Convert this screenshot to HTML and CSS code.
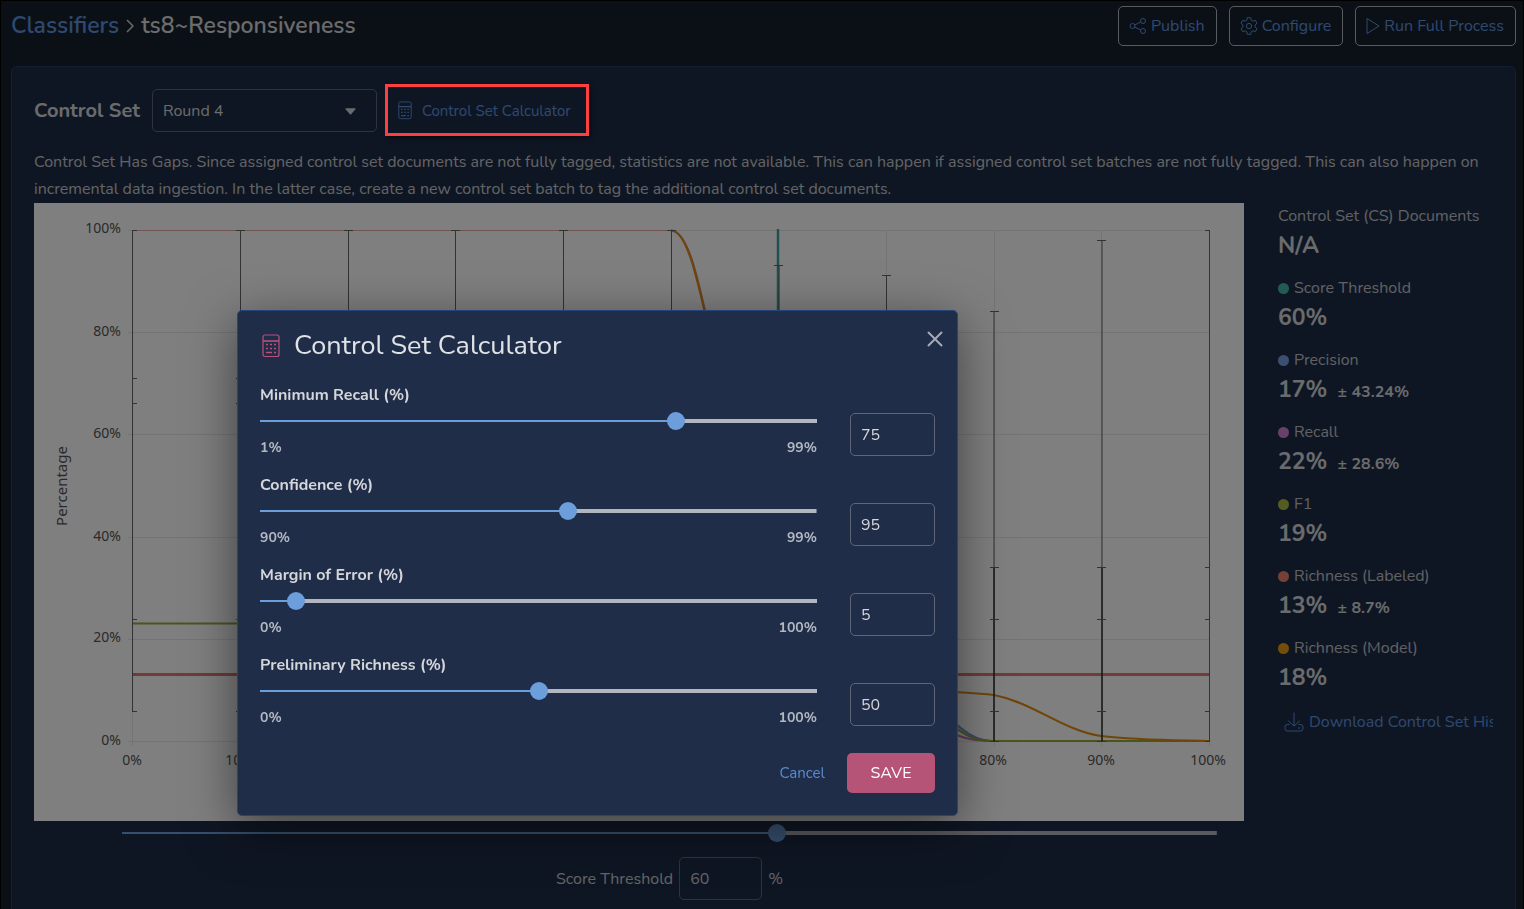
FILE: index.html
```html
<!DOCTYPE html>
<html lang="en">
<head>
<meta charset="utf-8">
<meta name="viewport" content="width=device-width, initial-scale=1">
<title>ts8~Responsiveness</title>
<link rel="stylesheet" href="styles.css">
</head>
<body>
<svg class="defs" aria-hidden="true">
  <symbol id="calc" viewBox="0 0 18 24">
    <rect x="1" y="1" width="16" height="21.500" rx="2" fill="none" stroke="currentColor" stroke-width="1.200"/>
    <path d="M1 7h16" stroke="currentColor" stroke-width="1.600"/>
    <path d="M4 10.500h2M8 10.500h2M12 10.500h2M4 14.500h2M8 14.500h2M12 14.500h2M4 18.500h6M12 18.500h2" stroke="currentColor" stroke-width="1.600"/>
  </symbol>
</svg>
<div class="page">
  <header class="topbar">
    <h1 class="crumbs"><a href="#">Classifiers</a>
      <svg class="chevron" viewBox="0 0 8 14"><path d="M1 1l6 6-6 6" fill="none" stroke="currentColor" stroke-width="1.500"/></svg>
      <span>ts8~Responsiveness</span></h1>
    <div class="actions">
      <button type="button" class="btn-outline">
        <svg viewBox="0 0 18 18" class="icon"><g fill="none" stroke="currentColor"><circle cx="3.500" cy="9" r="2.500"/><circle cx="14" cy="4" r="2.500"/><circle cx="14" cy="14" r="2.500"/><path d="M5.800 8l5.900-3M5.800 10l5.900 3"/></g></svg>
        Publish</button>
      <button type="button" class="btn-outline">
        <svg viewBox="0 0 18 18" class="icon"><g fill="none" stroke="currentColor" stroke-linejoin="round"><path d="M7.300.7h3.400l.5 2.500 1.700 1 2.400-.9 1.700 3-1.900 1.600v2.200l1.900 1.600-1.700 3-2.400-.9-1.700 1-.5 2.500H7.300l-.5-2.500-1.700-1-2.400.9-1.700-3 1.900-1.600V7.900L1 6.300l1.700-3 2.400.9 1.700-1z"/><circle cx="9" cy="9" r="2.600"/></g></svg>
        Configure</button>
      <button type="button" class="btn-outline">
        <svg viewBox="0 0 14 18" class="icon icon-play"><path d="M1 1.500v15L13 9z" fill="none" stroke="currentColor" stroke-linejoin="round"/></svg>
        Run Full Process</button>
    </div>
  </header>

  <main class="card">
    <div class="controls">
      <label class="controls-title" for="round">Control Set</label>
      <div class="select-wrap">
        <select id="round"><option>Round 4</option></select>
        <svg class="caret" viewBox="0 0 12 7"><path d="M1 0h10q1 0 .3 1L6.700 6.400q-.7.700-1.400 0L.7 1Q0 0 1 0z" fill="currentColor"/></svg>
      </div>
      <div class="calc-link">
        <button type="button"><svg class="calc-small"><use href="#calc"/></svg>Control Set Calculator</button>
        <span class="highlight"></span>
      </div>
    </div>
    <p class="notice">Control Set Has Gaps. Since assigned control set documents are not fully tagged, statistics are not available. This can happen if assigned control set batches are not fully tagged. This can also happen on incremental data ingestion. In the latter case, create a new control set batch to tag the additional control set documents.</p>
    <div class="content">
      <section class="chart-col">
        <svg class="chart" viewBox="0 0 1210 618" role="img" aria-label="Control set statistics by score threshold">
          <path class="grid" d="M94 27.500H1175M94 129.500H1175M94 231.500H1175M94 334.500H1175M94 436.500H1175M94 538.500H1175M98.500 27V543M206.500 27V543M314.500 27V543M421.500 27V543M529.500 27V543M637.500 27V543M744.500 27V543M852.500 27V543M960.500 27V543M1067.500 27V543M1175.500 27V543"/>
          <g fill="none" stroke-width="2.200">
            <path class="c-recall" d="M637 27.500C656 27 667 92 678 140C720 350 744 425 784 450C850 470 890 538 955 538"/>
            <path class="c-precision" d="M637 420C740 430 780 420 852 450C900 485 920 538 958 538H1175"/>
            <path class="c-f1" d="M98 420.500H637C740 430 780 430 852 460C900 494 918 538 955 538H1175"/>
            <path class="c-labeled" d="M98 471.500H1175"/>
            <path class="c-model" d="M637 27.500C655 27 666 90 677 136C710 340 744 460 852 480C890 490 930 488 960 492C1000 500 1030 528 1067 533C1100 537 1130 537 1175 538"/>
          </g>
          <path class="c-top" d="M98 27.500H637"/>
          <path class="c-threshold" d="M744 26V538"/>
          <g class="bars">
            <path d="M98.500 27.500V508M206.500 27.500V538M314.500 27.500V538M421.500 27.500V538M529.500 27.500V538M637.500 27.500V538M745 62.500V538M852.500 72.500V538M960 108V364M1068 37V364M1175.500 27.500V538"/>
            <path class="strong" d="M960 364V538M1068 364V538"/>
            <path d="M98 27.500h5M98 175.500h5M98 200.500h5M98 416.500h5M98 508.500h5M202 27.500h9M202 175.500h9M202 200.500h9M202 416.500h9M202 508.500h9M310 27.500h9M417 27.500h9M525 27.500h9M633 27.500h9M740 62.500h9M848 72.500h9M956 108.500h9M1063 37.500h9M1171 27.500h5M956 364.500h9M956 416.500h9M956 508.500h9M956 538.500h9M1063 364.500h9M1063 416.500h9M1063 508.500h9M1063 538.500h9M1171 364.500h5M1171 416.500h5M1171 508.500h5M1171 538.500h5"/>
          </g>
          <g class="axis" text-anchor="end">
            <text x="87" y="30">100%</text><text x="87" y="133">80%</text><text x="87" y="235">60%</text><text x="87" y="338">40%</text><text x="87" y="439">20%</text><text x="87" y="542">0%</text>
          </g>
          <g class="axis" text-anchor="middle">
            <text x="98" y="562">0%</text><text x="205" y="562">10%</text><text x="959" y="562">80%</text><text x="1067" y="562">90%</text><text x="1174" y="562">100%</text>
            <text class="axis-title" transform="translate(33 283) rotate(-90)">Percentage</text>
          </g>
        </svg>
        <div class="threshold">
          <input class="slider" type="range" min="0" max="100" value="60" aria-label="Score Threshold slider" style="--pos:.6">
          <div class="threshold-field"><label for="score">Score Threshold</label><input id="score" class="box" type="text" value="60"><span>%</span></div>
        </div>
      </section>
      <aside class="stats">
        <dl>
          <div><dt>Control Set (CS) Documents</dt><dd>N/A</dd></div>
          <div><dt><i class="dot d-threshold"></i>Score Threshold</dt><dd>60%</dd></div>
          <div><dt><i class="dot d-precision"></i>Precision</dt><dd>17% <small>± 43.24%</small></dd></div>
          <div><dt><i class="dot d-recall"></i>Recall</dt><dd>22% <small>± 28.6%</small></dd></div>
          <div><dt><i class="dot d-f1"></i>F1</dt><dd>19%</dd></div>
          <div><dt><i class="dot d-labeled"></i>Richness (Labeled)</dt><dd>13% <small>± 8.7%</small></dd></div>
          <div><dt><i class="dot d-model"></i>Richness (Model)</dt><dd>18%</dd></div>
        </dl>
        <a class="download" href="#"><svg viewBox="0 0 20 20"><g fill="none" stroke="currentColor" stroke-linecap="round" stroke-linejoin="round"><path d="M10 1v13M4.500 9l5.500 5 5.500-5"/><path d="M5 12.500H3.200Q1 12.500 1 15v1.500Q1 19 3.200 19h13.600q2.200 0 2.200-2.500V15q0-2.500-2.200-2.500H15M14.500 16h1.500"/></g></svg>Download Control Set History</a>
      </aside>
    </div>
  </main>
</div>

<div class="backdrop"></div>
<div class="modal" role="dialog" aria-modal="true" aria-labelledby="modal-title">
  <div class="modal-head">
    <svg class="calc-large"><use href="#calc"/></svg>
    <h2 id="modal-title">Control Set Calculator</h2>
    <button type="button" class="close" aria-label="Close"><svg viewBox="0 0 16 16"><path d="M1.500 1.500l13 13M14.500 1.500l-13 13" stroke="currentColor" stroke-width="2" stroke-linecap="round"/></svg></button>
  </div>
  <form class="fields">
    <div class="field">
      <div><label for="recall">Minimum Recall (%)</label>
        <input class="slider" type="range" min="1" max="99" value="75" aria-label="Minimum Recall slider" style="--pos:.7551">
        <div class="limits"><span>1%</span><span>99%</span></div></div>
      <input id="recall" class="box" type="text" value="75">
    </div>
    <div class="field">
      <div><label for="confidence">Confidence (%)</label>
        <input class="slider" type="range" min="90" max="99" value="95" aria-label="Confidence slider" style="--pos:.5556">
        <div class="limits"><span>90%</span><span>99%</span></div></div>
      <input id="confidence" class="box" type="text" value="95">
    </div>
    <div class="field">
      <div><label for="margin">Margin of Error (%)</label>
        <input class="slider" type="range" min="0" max="100" value="5" aria-label="Margin of Error slider" style="--pos:.05">
        <div class="limits"><span>0%</span><span>100%</span></div></div>
      <input id="margin" class="box" type="text" value="5">
    </div>
    <div class="field">
      <div><label for="richness">Preliminary Richness (%)</label>
        <input class="slider" type="range" min="0" max="100" value="50" aria-label="Preliminary Richness slider" style="--pos:.5">
        <div class="limits"><span>0%</span><span>100%</span></div></div>
      <input id="richness" class="box" type="text" value="50">
    </div>
    <div class="modal-foot">
      <button type="button" class="cancel">Cancel</button>
      <button type="submit" class="save">SAVE</button>
    </div>
  </form>
</div>
</body>
</html>
```
FILE: styles.css
```css
* { box-sizing: border-box; }
:root {
  --link: #5f92de;
  --text: #d4d6da;
  --panel: #1f2d47;
}
body {
  margin: 0;
  background: #16212f;
  color: var(--text);
  font: 16px/24px Nunito, Lato, sans-serif;
}
button, input, select { font: inherit; color: inherit; }
button { cursor: pointer; }
a { color: var(--link); text-decoration: none; }
.defs { display: none; }

.page {
  min-height: 100vh;
  display: flex;
  flex-direction: column;
  border: 1px solid #000;
  padding: 5px 7px 0 10px;
}
.topbar { display: flex; justify-content: space-between; align-items: flex-start; }
.crumbs {
  display: flex; align-items: center; gap: 7px;
  margin: 0; font-size: 23px; line-height: 40px; font-weight: 600;
}
.crumbs span { color: #d8d8d8; }
.chevron { width: 8px; height: 14px; }
.actions { display: flex; gap: 12px; }
.btn-outline {
  display: flex; align-items: center; gap: 4px;
  height: 40px; padding: 0 11px 0 10px;
  background: none; border: 1px solid #b4b7bc; border-radius: 5px;
  color: var(--link);
}
.icon { width: 18px; height: 18px; }
.icon-play { width: 14px; }

.card {
  flex: 1;
  margin-top: 20px;
  padding: 22px 22px 9px;
  background: var(--panel);
  border: 1px solid #243c66;
  border-bottom: 0;
  border-radius: 6px 6px 0 0;
}
.controls { display: flex; align-items: center; gap: 12px; }
.controls-title { font-size: 20px; font-weight: 700; }
.select-wrap { position: relative; width: 225px; }
.select-wrap select {
  appearance: none;
  width: 100%; height: 43px; padding: 0 10px;
  background: none; border: 1px solid #5f6776; border-radius: 5px;
}
.select-wrap option { background: var(--panel); }
.caret { position: absolute; right: 21px; top: 19px; width: 11px; height: 7px; pointer-events: none; }
.calc-link { position: relative; }
.calc-link button {
  display: flex; align-items: center; gap: 10px;
  height: 43px; padding: 0 14px 0 9px;
  border: 0; background: none; color: var(--link); font-size: 15px;
}
.calc-small { width: 14px; height: 19px; }
.highlight {
  position: absolute; inset: -5px -4px -4px; z-index: 20;
  border: 3px solid #ff3f3f;
  box-shadow: 2px 2px 4px rgba(0, 0, 0, .5);
  pointer-events: none;
}
.notice { margin: 17px 0 0; line-height: 27px; color: #c6c8cc; }
.content { display: grid; grid-template-columns: minmax(0, 1fr) 215px; gap: 34px; }
.chart { display: block; width: 100%; height: auto; background: #fff; }
.grid { stroke: #e8e8e8; fill: none; }
.bars path { stroke: #666; fill: none; }
.bars .strong { stroke: #333; stroke-width: 1.6; }
.c-recall { stroke: #c57fcb; }
.c-precision { stroke: #6c9bd8; }
.c-f1 { stroke: #98a83a; }
.c-labeled { stroke: #e07868; stroke-width: 2.8; }
.c-model { stroke: #e08d10; }
.c-top { stroke: #e0a89f; }
.c-threshold { stroke: #3fa59d; stroke-width: 2.5; }
.axis { font: 14px "Noto Sans", sans-serif; fill: #555; }
.axis-title { font-size: 15px; }

.threshold { padding: 3px 27px 0 88px; }
.threshold-field {
  display: flex; justify-content: center; align-items: center; gap: 6px;
  margin-top: 15px; color: #c6c8cc;
}
.box {
  width: 86px; height: 43px; padding: 0 10px;
  background: none; border: 1px solid #5f6776; border-radius: 5px;
}
.threshold-field .box { width: 83px; }

.slider {
  --edge: calc(9px + (100% - 18px) * var(--pos));
  appearance: none;
  display: block; width: 100%; height: 18px; margin: 0;
  background: none;
}
.slider::-webkit-slider-runnable-track {
  height: 18px;
  background:
    linear-gradient(#6c9edc, #6c9edc) left center / var(--edge) 2px no-repeat,
    linear-gradient(#b3b6bf, #b3b6bf) right center / calc(100% - var(--edge)) 4px no-repeat;
  border-radius: 2px;
}
.slider::-webkit-slider-thumb {
  appearance: none;
  width: 18px; height: 18px; border-radius: 50%;
  background: #6c9edc;
}

.stats { min-width: 0; padding-top: 1px; overflow: hidden; }
.stats dl { margin: 0; display: grid; gap: 12px; }
.stats dt { display: flex; align-items: center; gap: 5px; color: #c0c3c8; }
.stats dd { margin: 0; font-size: 23px; line-height: 36px; font-weight: 700; }
.stats small { margin-left: 4px; font-size: 16px; line-height: 24px; }
.dot { width: 11px; height: 11px; border-radius: 50%; }
.d-threshold { background: #48b5a9; }
.d-precision { background: #769fe0; }
.d-recall { background: #d083d0; }
.d-f1 { background: #a6b843; }
.d-labeled { background: #e88070; }
.d-model { background: #e89a18; }
.download {
  display: flex; align-items: center; gap: 5px;
  margin-top: 12px; padding-left: 6px; line-height: 28px; white-space: nowrap;
}
.download svg { flex: none; width: 20px; height: 20px; }

.backdrop { position: fixed; inset: 0; z-index: 10; background: rgba(0, 0, 0, .5); }
.modal {
  position: absolute; left: 237px; top: 310px; z-index: 30;
  width: 721px; padding: 16px 22px 22px;
  background: #1f2d48; border: 1px solid #26467a; border-radius: 5px;
  box-shadow: 0 12px 50px rgba(0, 0, 0, .5);
}
.modal-head { display: flex; align-items: center; margin-bottom: 18px; }
.modal-head h2 { flex: 1; margin: 0 0 0 14px; font-size: 27px; line-height: 38px; font-weight: 400; color: #dfe2e6; }
.calc-large { width: 18px; height: 24px; margin-left: 2px; color: #b8527a; }
.close {
  align-self: flex-start;
  width: 24px; height: 24px; margin-right: -12px; padding: 4px;
  border: 0; background: none; color: #a5abb6;
}
.close svg { display: block; }
.fields { display: grid; gap: 15px; }
.field { display: grid; grid-template-columns: minmax(0, 1fr) 85px; gap: 33px; align-items: end; }
.field label { display: block; font-weight: 700; }
.field .slider { margin: 5px 0 8px; }
.field .box { width: 100%; margin-bottom: 2px; }
.limits { display: flex; justify-content: space-between; font-size: 14px; line-height: 20px; font-weight: 700; color: #b3b8c2; }
.modal-foot { display: flex; justify-content: flex-end; margin-top: 10px; }
.modal-foot button { height: 40px; border: 0; border-radius: 5px; }
.modal-foot .cancel { padding: 0 22px; background: none; color: #5b8bd0; font-size: 15px; }
.modal-foot .save { width: 88px; background: #b55476; color: #fff; }
```
